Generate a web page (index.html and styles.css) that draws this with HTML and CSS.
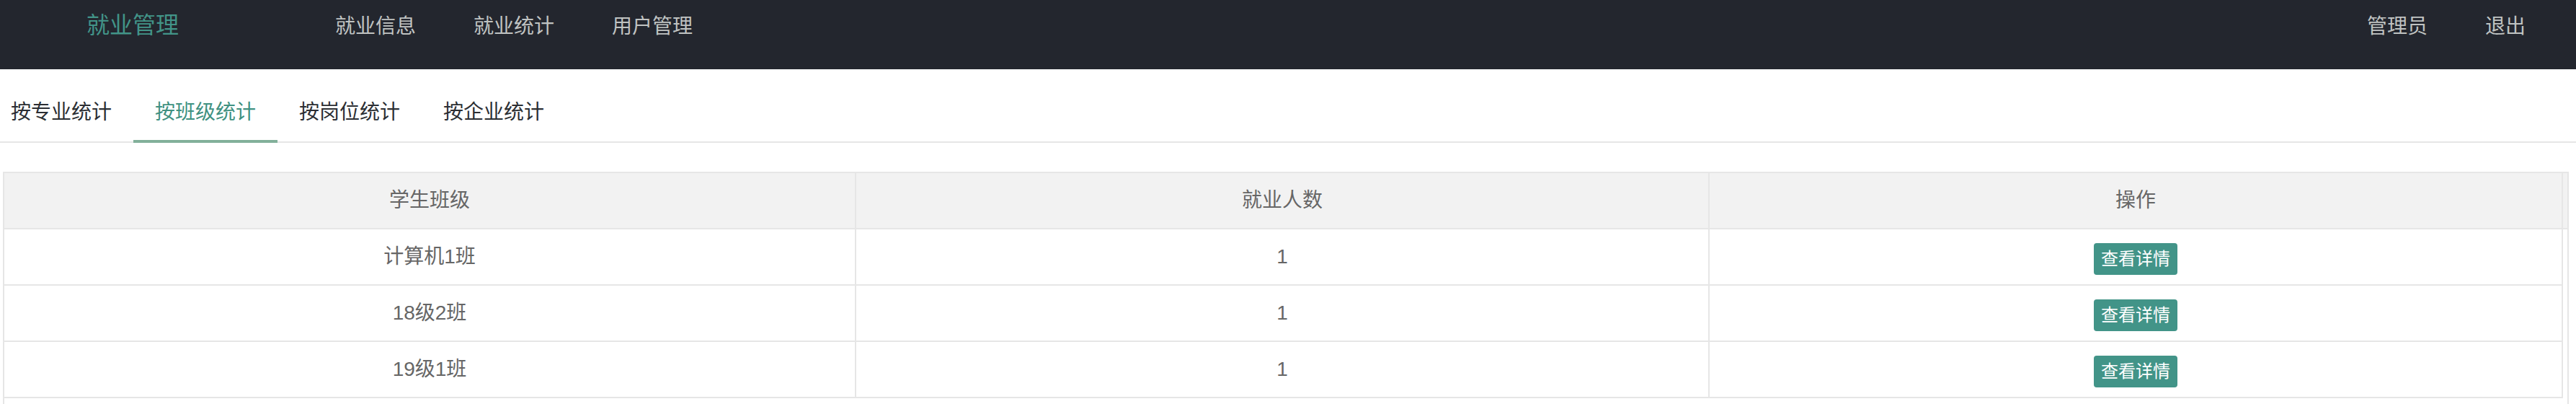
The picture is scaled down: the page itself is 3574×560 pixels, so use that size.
FILE: index.html
```html
<!DOCTYPE html>
<html lang="zh-CN">
<head>
<meta charset="utf-8">
<title>就业管理</title>
<link rel="stylesheet" href="styles.css">
</head>
<body>
<header class="header">
  <div class="logo">就业管理</div>
  <nav class="nav nav-left">
    <a class="nav-item">就业信息</a>
    <a class="nav-item">就业统计</a>
    <a class="nav-item">用户管理</a>
  </nav>
  <nav class="nav nav-right">
    <a class="nav-item">管理员</a>
    <a class="nav-item">退出</a>
  </nav>
</header>
<main class="content">
  <ul class="tabs">
    <li class="tab">按专业统计</li>
    <li class="tab tab-active">按班级统计</li>
    <li class="tab">按岗位统计</li>
    <li class="tab">按企业统计</li>
  </ul>
  <div class="table-view">
    <div class="thead">
      <div class="th">学生班级</div>
      <div class="th">就业人数</div>
      <div class="th">操作</div>
      <div class="patch"></div>
    </div>
    <div class="tbody">
      <div class="tr">
        <div class="td">计算机1班</div>
        <div class="td">1</div>
        <div class="td"><span class="btn">查看详情</span></div>
      </div>
      <div class="tr">
        <div class="td">18级2班</div>
        <div class="td">1</div>
        <div class="td"><span class="btn">查看详情</span></div>
      </div>
      <div class="tr">
        <div class="td">19级1班</div>
        <div class="td">1</div>
        <div class="td"><span class="btn">查看详情</span></div>
      </div>
    </div>
  </div>
</main>
</body>
</html>
```

FILE: styles.css
```css
* { box-sizing: border-box; }
html, body {
  margin: 0;
  padding: 0;
  background: #ffffff;
  overflow: hidden;
}
body {
  width: 3574px;
  height: 560px;
  font-family: "Liberation Sans", "Noto Sans CJK SC", sans-serif;
  color: #333;
}
.header {
  height: 96px;
  background: #23262e;
  display: flex;
  align-items: flex-start;
}
.logo {
  width: 368px;
  text-align: center;
  font-size: 32px;
  line-height: 70px;
  color: #429488;
}
.nav {
  display: flex;
}
.nav-left {
  margin-left: 57px;
}
.nav-right {
  margin-left: auto;
  margin-right: 30px;
}
.nav-item {
  display: block;
  padding: 0 40px;
  font-size: 28px;
  line-height: 73px;
  color: #c0c3c2;
}
.content {
  padding-top: 20px;
}
.tabs {
  list-style: none;
  margin: 0;
  padding: 0;
  display: flex;
  border-bottom: 2px solid #e6e6e6;
  height: 82px;
}
.tab {
  position: relative;
  padding: 0 30px;
  font-size: 28px;
  line-height: 80px;
  color: #2b2e33;
}
.tab:first-child {
  margin-left: -15px;
}
.tab-active {
  color: #3f9181;
}
.tab-active::after {
  content: "";
  position: absolute;
  left: 0;
  right: 0;
  bottom: -2px;
  height: 4px;
  background: #82b09a;
}
.table-view {
  margin: 40px 10px 0 4px;
  border: 2px solid #e6e6e6;
  border-bottom: none;
  padding-bottom: 40px;
  font-size: 28px;
  color: #666;
}
.thead {
  display: grid;
  grid-template-columns: 1182px 1184px 1184px 6px;
  background: #f2f2f2;
  border-bottom: 2px solid #e6e6e6;
}
.th, .td {
  height: 76px;
  padding: 0 30px;
  display: flex;
  align-items: center;
  justify-content: center;
  line-height: 40px;
  border-right: 2px solid #e6e6e6;
}
.tbody {
  width: 3550px;
}
.tr {
  display: grid;
  grid-template-columns: 1182px 1184px 1184px;
  border-bottom: 2px solid #e6e6e6;
}
.btn {
  display: inline-block;
  height: 44px;
  line-height: 44px;
  padding: 0 10px;
  font-size: 24px;
  color: #ffffff;
  background: #429488;
  border-radius: 4px;
  margin-top: 6px;
}
```
